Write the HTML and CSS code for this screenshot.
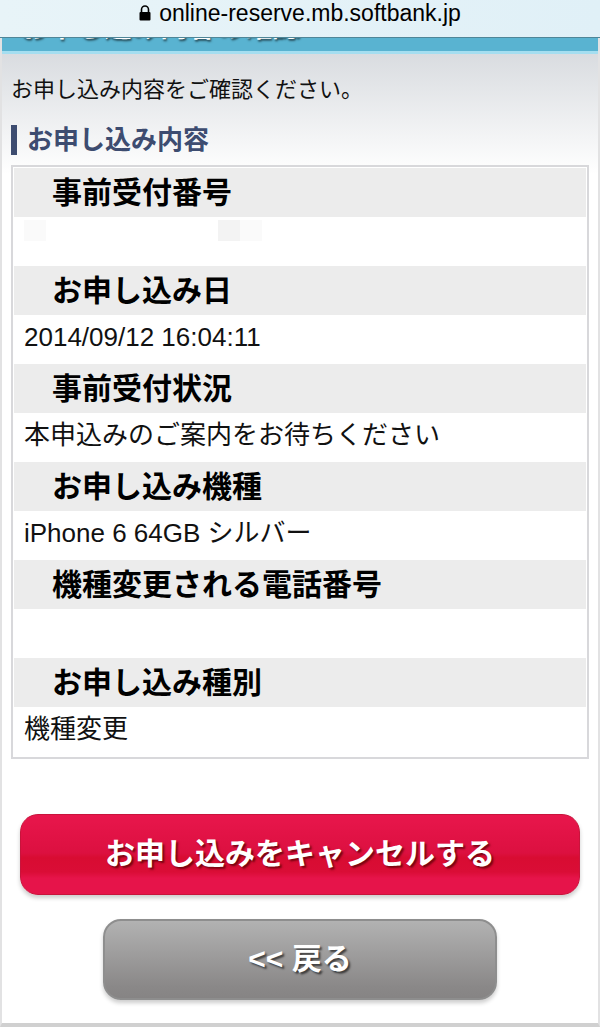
FILE: index.html
```
<!DOCTYPE html>
<html lang="ja">
<head>
    <meta charset="UTF-8">
    <title>お申し込み内容の確認</title>
    <meta name="viewport" content="width=device-width, initial-scale=1.0">
    <link rel="stylesheet" href="styles.css">
</head>
<body>

<div class="address-bar">
    <svg class="lock" width="12" height="16" viewBox="0 0 12 16" aria-hidden="true">
        <path d="M2.5 8V4.5a3.5 3.5 0 0 1 7 0V8" fill="none" stroke="#000" stroke-width="1.6"/>
        <rect x="0.5" y="7" width="11" height="8.5" rx="1" fill="#000"/>
    </svg>
    <span>online-reserve.mb.softbank.jp</span>
</div>

<div class="page">
    <h1 class="page-title">お申し込み内容の確認</h1>

    <main class="content">
        <p class="intro">お申し込み内容をご確認ください。</p>
        <h2 class="section-title">お申し込み内容</h2>

        <dl class="details">
            <dt>事前受付番号</dt>
            <dd class="masked">
                <span class="block"></span>
                <span class="block block-dark"></span>
                <span class="block"></span>
            </dd>
            <dt>お申し込み日</dt>
            <dd>2014/09/12 16:04:11</dd>
            <dt>事前受付状況</dt>
            <dd>本申込みのご案内をお待ちください</dd>
            <dt>お申し込み機種</dt>
            <dd>iPhone 6 64GB シルバー</dd>
            <dt>機種変更される電話番号</dt>
            <dd></dd>
            <dt>お申し込み種別</dt>
            <dd>機種変更</dd>
        </dl>

        <form class="actions" action="#" method="post">
            <button class="btn btn-cancel" type="submit">お申し込みをキャンセルする</button>
            <button class="btn btn-back" type="button">&lt;&lt; 戻る</button>
        </form>
    </main>
</div>

</body>
</html>
```

FILE: styles.css
```
* {
    box-sizing: border-box;
}
body {
    margin: 0;
    background-color: #fff;
    color: #111;
    font-family: "Liberation Sans", "Noto Sans CJK JP", sans-serif;
}

/* Browser bar, stays over the page title */
.address-bar {
    position: fixed;
    top: 0;
    left: 0;
    right: 0;
    height: 38px;
    padding-bottom: 11px;
    display: flex;
    justify-content: center;
    align-items: center;
    gap: 8px;
    background: linear-gradient(to right, #e8f4f8, #e0f0f7);
    border-bottom: 1px solid #4f8698;
    color: #000;
    font-size: 23px;
    line-height: 26px;
}

.page {
    border: 2px solid #e2e2e3;
    border-top: none;
    border-bottom: 4px solid #d0d0d0;
}
.page-title {
    height: 54px;
    margin: 0;
    padding: 8px 18px 0;
    background-color: #59b3d1;
    border-bottom: 3px solid #a5def0;
    color: #fff;
    font-size: 28px;
    line-height: 40px;
    text-shadow: 1px 2px 2px rgba(0, 0, 0, 0.5);
}
.content {
    padding: 20px 9px 23px;
    background: linear-gradient(#d9dce0, #fff 120px);
}
.intro {
    margin: 0;
    font-size: 22px;
    line-height: 32px;
}
.section-title {
    margin: 19px 0 10px;
    padding-left: 10px;
    border-left: 6px solid #3d4c70;
    color: #3d4c70;
    font-size: 26px;
    line-height: 30px;
}

.details {
    margin: 0;
    padding: 1px;
    background-color: #fff;
    border: 2px solid #d8d8db;
}
.details dt {
    height: 49px;
    padding-left: 38px;
    background-color: #ececec;
    color: #000;
    font-size: 30px;
    font-weight: bold;
    line-height: 49px;
}
.details dd {
    height: 49px;
    margin: 0;
    padding-left: 10px;
    font-size: 26px;
    line-height: 45px;
}
.details .masked {
    display: flex;
    padding-top: 3px;
}
.block {
    width: 22px;
    height: 21px;
    background-color: #fafafa;
}
.block-dark {
    margin-left: 172px;
    background-color: #f3f3f3;
}

.actions {
    display: flex;
    flex-direction: column;
    align-items: center;
    gap: 24px;
    margin-top: 55px;
}
.btn {
    height: 81px;
    padding: 0 0 8px;
    border-radius: 18px;
    color: #fff;
    font-family: inherit;
    font-size: 30px;
    font-weight: bold;
    box-shadow: 0 3px 4px rgba(0, 0, 0, 0.2);
    cursor: pointer;
}
.btn-cancel {
    width: 97%;
    border: 1px solid #c8143c;
    background: linear-gradient(#e8164c, #dc1040 48%, #d80c32 54%, #da0d36 72%, #e6144a 80%, #e6144a);
    text-shadow: 2px 2px 2px rgba(80, 0, 0, 0.7);
}
.btn-back {
    width: 68%;
    border: 2px solid #8e8e8e;
    background: linear-gradient(#b2b2b2, #8a8888 85%, #868484);
    text-shadow: 2px 2px 2px rgba(0, 0, 0, 0.6);
}
```
